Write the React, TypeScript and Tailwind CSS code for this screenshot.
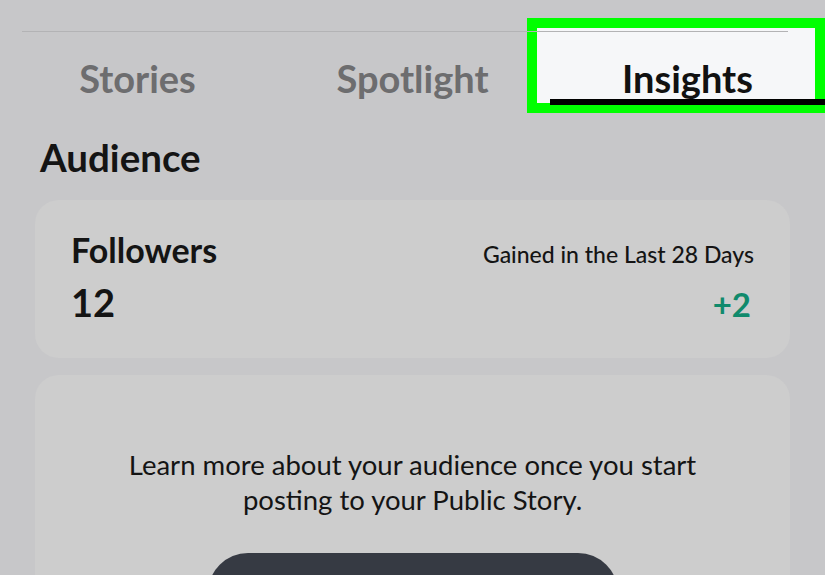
const tabs = ['Stories', 'Spotlight', 'Insights'];

export default function App() {
  const active = 'Insights';

  return (
    <div className="relative h-[575px] w-[825px] overflow-hidden bg-[#c7c7c9] font-['Lato',sans-serif] text-[#141414]">
      {/* highlight box drawn over the screenshot */}
      <div className="absolute left-[527px] top-[18px] h-[95px] w-[298px] border-[10px] border-[#00ff00] bg-[#f6f7f9]" />

      <div className="relative pt-[31px]">
        <div className="mx-[22px] h-px w-[766px] bg-[#b3b3b5]" />

        <div className="grid h-[73px] grid-cols-3">
          {tabs.map((tab) => (
            <div key={tab} className="flex flex-col items-center justify-end">
              <span
                className={`text-[38px] font-bold leading-none ${
                  tab === active ? 'text-[#111]' : 'text-[#6d6d6f]'
                }`}
              >
                {tab}
              </span>
              <div
                className={`mt-[2px] h-[6px] w-full ${tab === active ? 'bg-black' : 'bg-transparent'}`}
              />
            </div>
          ))}
        </div>

        <h2 className="mt-[33px] px-[40px] text-[38.5px] font-bold leading-none">Audience</h2>

        <div className="mx-[35px] mt-[23px] h-[158px] rounded-[24px] bg-[#cdcdcd] px-[36px] pt-[33px]">
          <div className="flex items-baseline justify-between">
            <span className="text-[34px] font-bold leading-none">Followers</span>
            <span className="text-[23px] font-medium leading-none">Gained in the Last 28 Days</span>
          </div>
          <div className="mt-[16px] flex items-baseline justify-between">
            <span className="text-[38px] font-bold leading-none">12</span>
            <span className="pr-[3px] text-[33px] font-bold leading-none text-[#108a6c]">+2</span>
          </div>
        </div>

        <div className="mx-[35px] mt-[17px] flex h-[260px] flex-col items-center rounded-[24px] bg-[#cdcdcd] pt-[72px]">
          <p className="text-center text-[27.5px] leading-[35px]">
            Learn more about your audience once you start
            <br />
            posting to your Public Story.
          </p>
          <button className="mt-[36px] h-[80px] w-[410px] rounded-full bg-[#363a43]" />
        </div>
      </div>
    </div>
  );
}
